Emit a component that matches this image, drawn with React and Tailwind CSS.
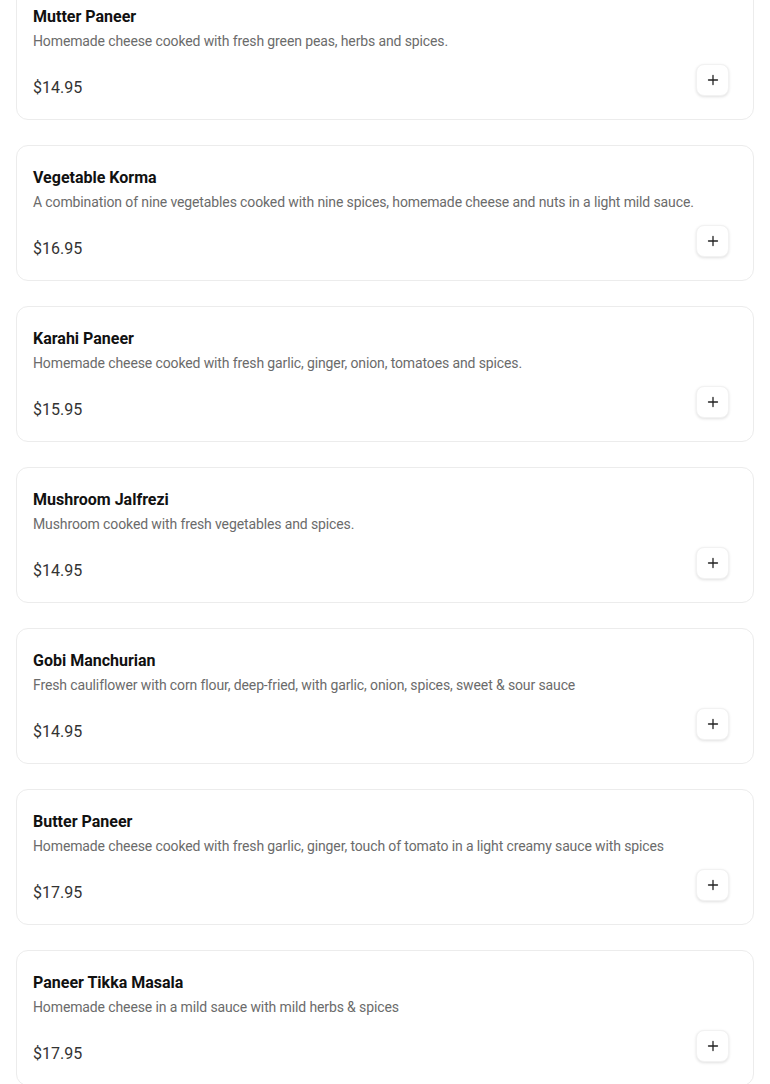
import React from "react";

const items = [
  ["Mutter Paneer", "Homemade cheese cooked with fresh green peas, herbs and spices.", "$14.95"],
  ["Vegetable Korma", "A combination of nine vegetables cooked with nine spices, homemade cheese and nuts in a light mild sauce.", "$16.95"],
  ["Karahi Paneer", "Homemade cheese cooked with fresh garlic, ginger, onion, tomatoes and spices.", "$15.95"],
  ["Mushroom Jalfrezi", "Mushroom cooked with fresh vegetables and spices.", "$14.95"],
  ["Gobi Manchurian", "Fresh cauliflower with corn flour, deep-fried, with garlic, onion, spices, sweet & sour sauce", "$14.95"],
  ["Butter Paneer", "Homemade cheese cooked with fresh garlic, ginger, touch of tomato in a light creamy sauce with spices", "$17.95"],
  ["Paneer Tikka Masala", "Homemade cheese in a mild sauce with mild herbs & spices", "$17.95"],
];

function PlusIcon() {
  return (
    <svg width="12" height="12" viewBox="0 0 12 12" fill="none" stroke="#222" strokeWidth="1.3" strokeLinecap="round">
      <path d="M6 1.5v9M1.5 6h9" />
    </svg>
  );
}

export default function App() {
  return (
    <div className="h-[1084px] overflow-hidden bg-white" style={{ fontFamily: "Roboto, 'Liberation Sans', sans-serif" }}>
      <div className="-mt-[16px] flex flex-col gap-[25px] px-4">
        {items.map(([name, desc, price], i) => (
          <div key={i} className="relative rounded-xl border border-[#ececec] bg-white px-4 pt-5 pb-[19px]">
            <div className="text-base font-bold leading-6 text-[#111111]">{name}</div>
            <div className="mt-[2px] text-sm leading-5 tracking-[-0.12px] text-[#6b6b6b]">{desc}</div>
            <div className="mt-[25px] text-base font-normal leading-6 text-[#333333]">{price}</div>
            <button className="absolute right-[24px] bottom-[23px] flex h-[32px] w-[33px] items-center justify-center rounded-lg border border-[#f2f2f2] bg-white shadow-[0_1px_3px_rgba(0,0,0,0.12)]">
              <PlusIcon />
            </button>
          </div>
        ))}
      </div>
    </div>
  );
}
